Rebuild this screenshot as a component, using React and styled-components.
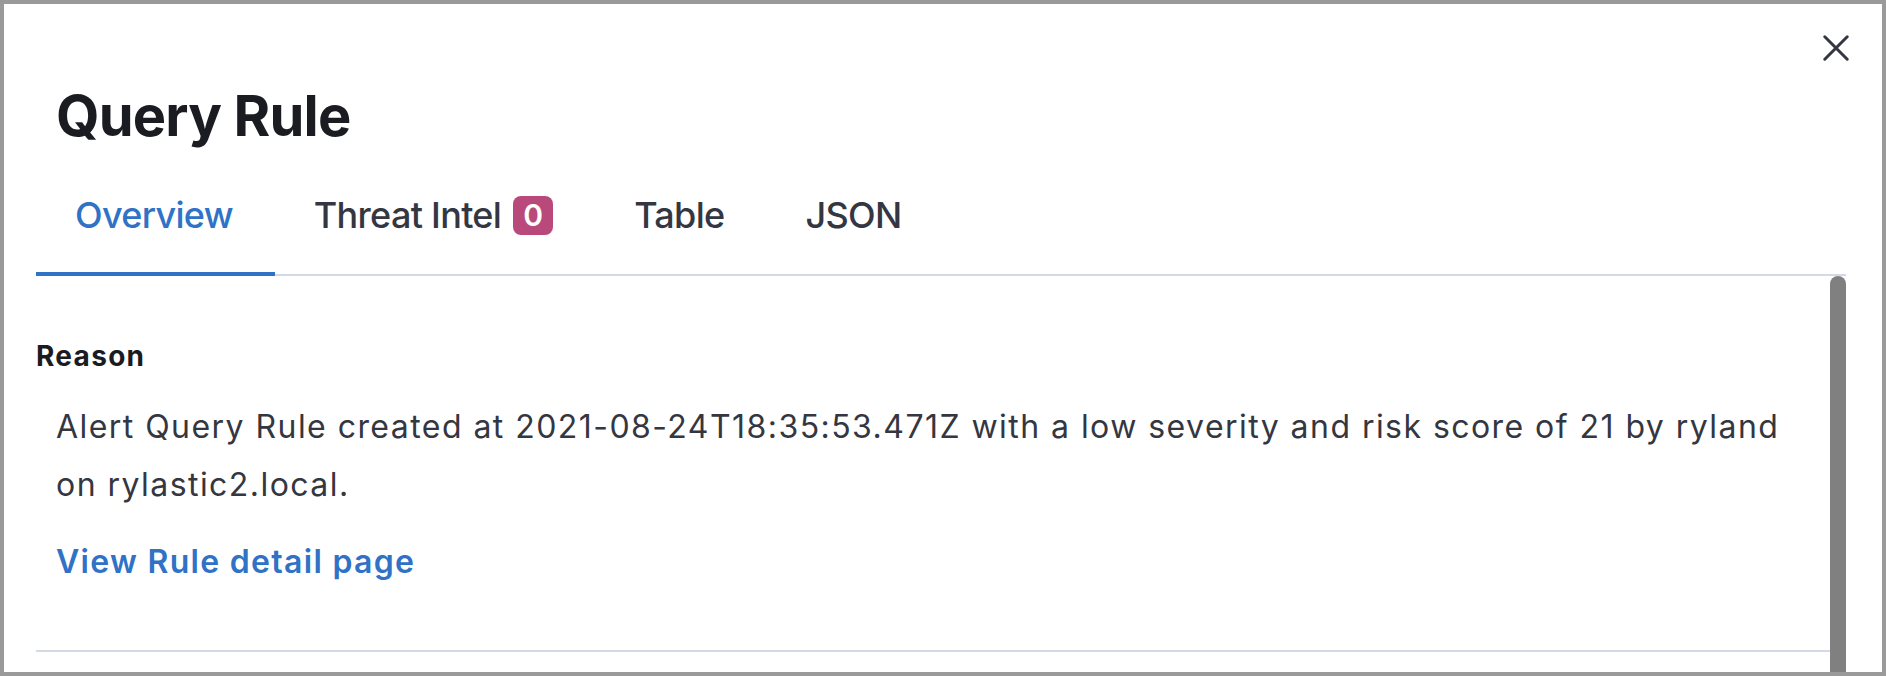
import React, { useState } from 'react'
import styled, { createGlobalStyle } from 'styled-components'

const GlobalStyle = createGlobalStyle`
  html, body {
    margin: 0;
    padding: 0;
    background: #ffffff;
  }
  body {
    font-family: Inter, "Noto Sans", "Liberation Sans", sans-serif;
    -webkit-font-smoothing: antialiased;
  }
`

const tabs = [
  { id: 'overview', label: 'Overview' },
  { id: 'threat', label: 'Threat Intel', count: 0 },
  { id: 'table', label: 'Table' },
  { id: 'json', label: 'JSON' },
]

function CloseIcon() {
  return (
    <svg width="26" height="26" viewBox="0 0 26 26" fill="none">
      <path d="M1.8 1.8 L24.2 24.2 M24.2 1.8 L1.8 24.2" stroke="#343741" strokeWidth="3" strokeLinecap="round" />
    </svg>
  )
}

function App() {
  const [active, setActive] = useState('overview')

  return (
    <>
      <GlobalStyle />
      <Flyout>
        <CloseButton aria-label="Close">
          <CloseIcon />
        </CloseButton>

        <Header>
          <Title>Query Rule</Title>
          <TabBar>
            {tabs.map(t => (
              <Tab key={t.id} selected={active === t.id} onClick={() => setActive(t.id)}>
                {t.label}
                {t.count !== undefined && <Badge>{t.count}</Badge>}
              </Tab>
            ))}
          </TabBar>
        </Header>

        <Body>
          <Content>
            <Section>
              <Label>Reason</Label>
              <Description>
                Alert Query Rule created at 2021-08-24T18:35:53.471Z with a low severity and risk score of 21 by ryland on rylastic2.local.
              </Description>
              <DetailLink href="#">View Rule detail page</DetailLink>
            </Section>
            <Divider />
          </Content>
          <ScrollTrack>
            <Thumb />
          </ScrollTrack>
        </Body>
      </Flyout>
    </>
  )
}

export default App



const Flyout = styled.div`
  position: relative;
  box-sizing: border-box;
  height: 100vh;
  border: 4px solid #9a9a9a;
  background: #ffffff;
  display: flex;
  flex-direction: column;
  overflow: hidden;
  padding-left: 32px;
  padding-right: 36px;
`

const CloseButton = styled.button`
  position: absolute;
  top: 31px;
  right: 33px;
  width: 26px;
  height: 26px;
  padding: 0;
  border: none;
  background: transparent;
  display: flex;
  cursor: pointer;
`

const Header = styled.div`
  padding-top: 76px;
  display: flex;
  flex-direction: column;
`

const Title = styled.h1`
  margin: 0 0 0 20px;
  font-size: 56px;
  line-height: 72px;
  font-weight: 700;
  color: #1a1c21;
  letter-spacing: -0.8px;
`

const TabBar = styled.div`
  display: flex;
  box-shadow: inset 0 -2px 0 #d3dae6;
`

const Tab = styled.button`
  display: inline-flex;
  align-items: center;
  gap: 12px;
  padding: 39px 42px 37px 39px;
  border: none;
  background: transparent;
  font-family: inherit;
  font-size: 36px;
  line-height: 48px;
  font-weight: 500;
  letter-spacing: -0.7px;
  color: ${p => (p.selected ? '#2f72c6' : '#343741')};
  box-shadow: ${p => (p.selected ? 'inset 0 -4px 0 #2f72c6' : 'none')};
  cursor: pointer;
`

const Badge = styled.span`
  display: inline-flex;
  align-items: center;
  justify-content: center;
  height: 39px;
  min-width: 40px;
  box-sizing: border-box;
  padding: 0 10px;
  border-radius: 8px;
  background: #b9497b;
  color: #ffffff;
  font-size: 30px;
  font-weight: 600;
  letter-spacing: 0;
  line-height: 1;
`

const Body = styled.div`
  flex: 1;
  min-height: 0;
  display: flex;
`

const Content = styled.div`
  flex: 1;
  min-width: 0;
  padding-top: 60px;
`

const Section = styled.div`
  display: flex;
  flex-direction: column;
  align-items: flex-start;
`

const Label = styled.div`
  font-size: 28px;
  line-height: 40px;
  font-weight: 700;
  letter-spacing: 1.3px;
  color: #1a1c21;
`

const Description = styled.p`
  margin: 22px 0 0 20px;
  padding-right: 40px;
  font-size: 32px;
  line-height: 58px;
  font-weight: 400;
  letter-spacing: 1.45px;
  color: #343741;
`

const DetailLink = styled.a`
  margin: 19px 0 0 20px;
  font-size: 32px;
  line-height: 58px;
  font-weight: 600;
  letter-spacing: 1.3px;
  color: #2f72c6;
  text-decoration: none;
`

const Divider = styled.hr`
  margin: 59px 0 0;
  border: none;
  height: 2px;
  background: #d3dae6;
`

const ScrollTrack = styled.div`
  width: 16px;
  flex-shrink: 0;
  display: flex;
`

const Thumb = styled.div`
  width: 16px;
  height: 100%;
  background: #808080;
  border-radius: 8px 8px 0 0;
`
